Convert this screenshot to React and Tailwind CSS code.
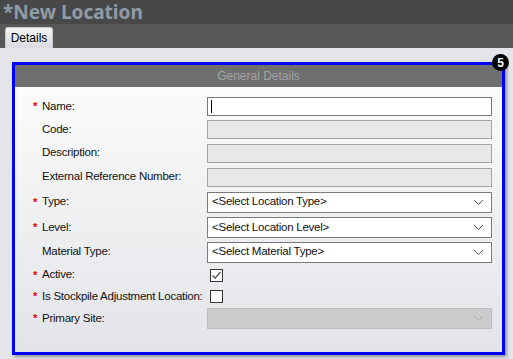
import React from 'react';

function Chevron({ color = '#555' }) {
  return (
    <svg width="11" height="7" viewBox="0 0 11 7" className="shrink-0">
      <polyline points="1,1 5.5,5.5 10,1" fill="none" stroke={color} strokeWidth="1" />
    </svg>
  );
}

function Label({ text, required }) {
  return (
    <div className="flex items-center w-[174px] shrink-0 whitespace-nowrap">
      <span className="w-[9px] text-[#e00000] text-[11px] font-bold leading-none">{required ? '*' : ''}</span>
      <span className="text-[11.5px] tracking-[-0.25px] text-[#111]">{text}</span>
    </div>
  );
}

function TextBox({ disabled, cursor }) {
  return (
    <div
      className={`w-[285px] h-[19px] border flex items-center px-[3px] ${
        disabled ? 'bg-[#e8e8e8] border-[#a5a5a5]' : 'bg-white border-[#7a7a7a]'
      }`}
    >
      {cursor && <div className="w-px h-[13px] bg-black" />}
    </div>
  );
}

function Select({ value, disabled }) {
  return (
    <div
      className={`w-[285px] h-[21px] border flex items-center justify-between pl-[4px] pr-[7px] ${
        disabled ? 'bg-[#cccccc] border-[#bdbdbd]' : 'bg-white border-[#7a7a7a]'
      }`}
    >
      <span className="text-[11.5px] tracking-[-0.25px] text-[#111] whitespace-nowrap">{value}</span>
      <Chevron color={disabled ? '#aaa' : '#555'} />
    </div>
  );
}

function CheckBox({ checked }) {
  return (
    <div className="w-[13px] h-[13px] border border-[#333] bg-white flex items-center justify-center ml-[3px]">
      {checked && (
        <svg width="11" height="11" viewBox="0 0 11 11">
          <polyline points="1.5,5.5 4.2,8.2 9.5,2" fill="none" stroke="#444" strokeWidth="1.2" />
        </svg>
      )}
    </div>
  );
}

const rows = [
  { label: 'Name:', required: true, h: 'h-[23px]', field: <TextBox cursor /> },
  { label: 'Code:', h: 'h-[23px]', field: <TextBox disabled /> },
  { label: 'Description:', h: 'h-[24px]', field: <TextBox disabled /> },
  { label: 'External Reference Number:', h: 'h-[24px]', field: <TextBox disabled /> },
  { label: 'Type:', required: true, h: 'h-[26px]', field: <Select value="<Select Location Type>" /> },
  { label: 'Level:', required: true, h: 'h-[25px]', field: <Select value="<Select Location Level>" /> },
  { label: 'Material Type:', h: 'h-[24px]', field: <Select value="<Select Material Type>" /> },
  { label: 'Active:', required: true, h: 'h-[22px]', field: <CheckBox checked /> },
  { label: 'Is Stockpile Adjustment Location:', required: true, h: 'h-[21px]', field: <CheckBox /> },
  { label: 'Primary Site:', required: true, h: 'h-[23px]', field: <Select value="" disabled /> },
];

export default function App() {
  return (
    <div
      className="w-[513px] h-[359px] overflow-hidden bg-[#e4e5e9] flex flex-col"
      style={{ fontFamily: '"Liberation Sans", Arial, sans-serif' }}
    >
      {/* Title bar */}
      <div className="h-[24px] bg-[#484848] flex items-center pl-[3px] shrink-0">
        <span
          className="text-[19px] font-bold text-[#8f9ba6] leading-[24px]"
          style={{ fontFamily: '"Noto Sans", sans-serif' }}
        >
          *New Location
        </span>
      </div>

      {/* Tab strip */}
      <div className="h-[24px] bg-[#585858] flex items-end pl-[5px] shrink-0">
        <div className="h-[21px] w-[48px] rounded-t-[3px] bg-gradient-to-b from-[#f4f4f4] to-[#d9dbe0] border border-b-0 border-[#c8c8c8] flex items-center justify-center">
          <span className="text-[12px] text-black">Details</span>
        </div>
      </div>

      {/* Content */}
      <div className="pt-[14px] pl-[12px]">
        <div className="relative w-[493px] h-[293px] border-[3px] border-[#0000ff] flex flex-col shadow-[2px_2px_3px_rgba(0,0,0,0.35)]">
          <div className="h-[22px] bg-[#6f6f6f] flex items-center justify-center shrink-0">
            <span className="text-[12px] text-[#a3a3a3]">General Details</span>
          </div>
          <div className="flex-1 bg-gradient-to-b from-[#fbfbfb] to-[#e3e4e8] pt-[8px] pl-[18px]">
            {rows.map((r) => (
              <div key={r.label} className={`${r.h} flex items-center`}>
                <Label text={r.label} required={r.required} />
                {r.field}
              </div>
            ))}
          </div>
          <div className="absolute -top-[11px] -right-[7px] w-[17px] h-[17px] rounded-full bg-black flex items-center justify-center">
            <span className="text-[12px] font-bold text-white leading-none">5</span>
          </div>
        </div>
      </div>
    </div>
  );
}
